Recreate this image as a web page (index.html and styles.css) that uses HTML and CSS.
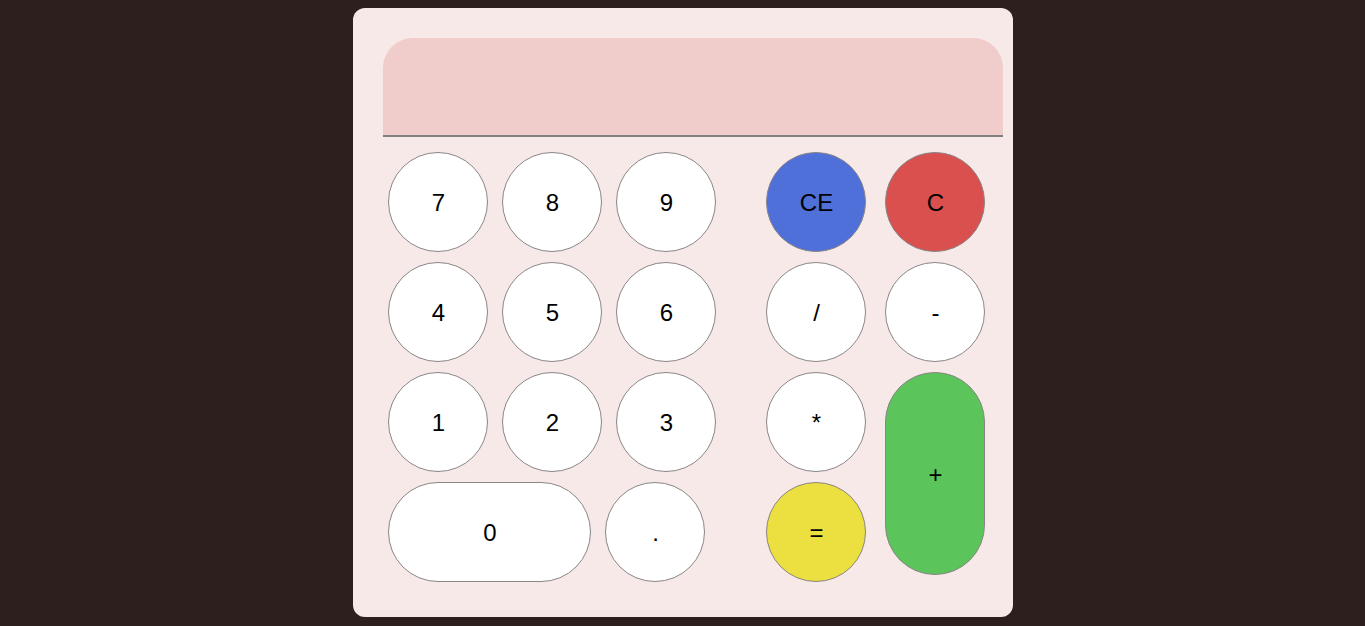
FILE: index.html
```html
<!DOCTYPE html>
<html>
<head>
<meta charset="utf-8">
<link rel="stylesheet" href="styles.css">
</head>
<body>
<div class="calc">
  <div class="display"></div>
  <div class="keypad">
    <div class="digits">
      <div class="row">
        <button class="key">7</button>
        <button class="key">8</button>
        <button class="key">9</button>
      </div>
      <div class="row">
        <button class="key">4</button>
        <button class="key">5</button>
        <button class="key">6</button>
      </div>
      <div class="row">
        <button class="key">1</button>
        <button class="key">2</button>
        <button class="key">3</button>
      </div>
      <div class="row">
        <button class="key key-zero">0</button>
        <button class="key">.</button>
      </div>
    </div>
    <div class="ops">
      <button class="key key-ce">CE</button>
      <button class="key key-c">C</button>
      <button class="key">/</button>
      <button class="key">-</button>
      <button class="key">*</button>
      <button class="key key-plus">+</button>
      <button class="key key-eq">=</button>
    </div>
  </div>
</div>
</body>
</html>
```

FILE: styles.css
```css
html, body {
  margin: 0;
  padding: 0;
}
body {
  background: #2e1f1f;
  font-family: "Liberation Sans", Arial, sans-serif;
  padding-top: 8px;
  height: 618px;
}
.calc {
  width: 620px;
  margin: 0 auto;
  background: #f7e9e8;
  border-radius: 12px;
  padding: 30px 10px 35px 30px;
}
.display {
  height: 97px;
  background: #f0cccb;
  border-radius: 30px 30px 0 0;
  border-bottom: 2px solid #808080;
}
.keypad {
  display: flex;
  gap: 50px;
  margin-top: 15px;
  margin-left: 5px;
}
.digits {
  display: flex;
  flex-direction: column;
  gap: 10px;
}
.row {
  display: flex;
  gap: 14px;
}
.ops {
  display: grid;
  grid-template-columns: 100px 100px;
  grid-template-rows: repeat(4, 100px);
  column-gap: 19px;
  row-gap: 10px;
}
.key {
  width: 100px;
  height: 100px;
  box-sizing: border-box;
  border: 1px solid #8a8586;
  border-radius: 50px;
  background: #ffffff;
  color: #000000;
  font-family: "Liberation Sans", Arial, sans-serif;
  font-size: 24px;
  padding: 2px 0 0 2px;
  display: flex;
  align-items: center;
  justify-content: center;
}
.key-zero {
  width: 203px;
}
.key-ce {
  background: #4f6fd9;
}
.key-c {
  background: #d9504f;
}
.key-eq {
  background: #ece041;
  grid-column: 1;
  grid-row: 4;
}
.key-plus {
  background: #5bc45b;
  grid-column: 2;
  grid-row: 3 / span 2;
  height: 203px;
  align-self: start;
}
```
